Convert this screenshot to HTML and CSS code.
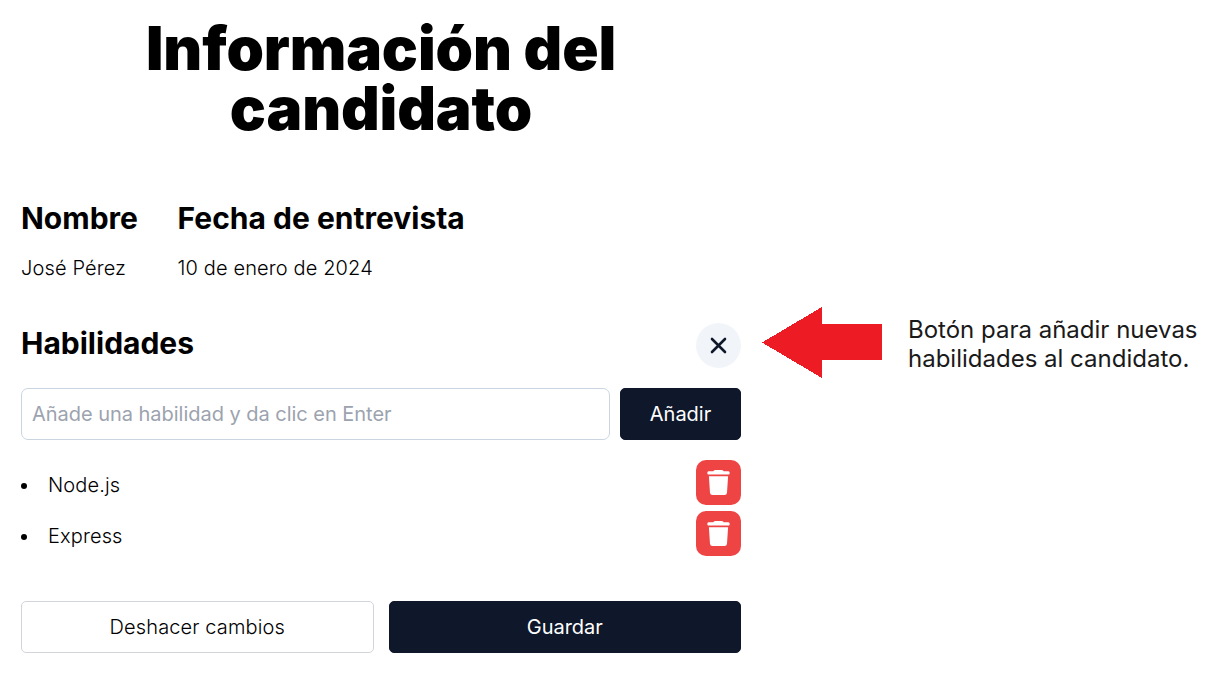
FILE: index.html
```html
<!DOCTYPE html>
<html lang="es">
<head>
<meta charset="utf-8">
<title>Información del candidato</title>
<link rel="stylesheet" href="styles.css">
</head>
<body>
<div class="page">
  <main class="candidate">
    <h1 class="title">Información del candidato</h1>
    <div class="facts">
      <section class="fact fact-name"><h2>Nombre</h2><p>José Pérez</p></section>
      <section class="fact"><h2>Fecha de entrevista</h2><p>10 de enero de 2024</p></section>
    </div>
    <div class="skills-head">
      <h2 class="skills-title">Habilidades</h2>
      <button class="close" aria-label="Cerrar"><svg width="45" height="45" viewBox="0 0 45 45"><path d="M16 16L29 29M29 16L16 29" stroke="#0f172a" stroke-width="2.6" stroke-linecap="round" fill="none"/></svg></button>
    </div>
    <div class="add-row">
      <input class="skill-input" type="text" placeholder="Añade una habilidad y da clic en Enter">
      <button class="btn primary add">Añadir</button>
    </div>
    <ul class="skills">
      <li class="skill"><i class="dot"></i><span>Node.js</span><button class="delete" aria-label="Eliminar"><svg width="45" height="45" viewBox="0 0 45 45"><path d="M12.500 11.300H17.200Q18.200 9.900 19.500 9.900H25.500Q26.800 9.900 27.800 11.300H32.500Q33.700 11.300 33.700 12.900Q33.700 14.500 32.500 14.500H12.500Q11.300 14.500 11.300 12.900Q11.300 11.300 12.500 11.300ZM12.900 16.200H32.100L31 32.700Q30.800 35.100 28.500 35.100H16.500Q14.200 35.100 14 32.700Z" fill="#fff"/></svg></button></li>
      <li class="skill"><i class="dot"></i><span>Express</span><button class="delete" aria-label="Eliminar"><svg width="45" height="45" viewBox="0 0 45 45"><path d="M12.500 11.300H17.200Q18.200 9.900 19.500 9.900H25.500Q26.800 9.900 27.800 11.300H32.500Q33.700 11.300 33.700 12.900Q33.700 14.500 32.500 14.500H12.500Q11.300 14.500 11.300 12.900Q11.300 11.300 12.500 11.300ZM12.900 16.200H32.100L31 32.700Q30.800 35.100 28.500 35.100H16.500Q14.200 35.100 14 32.700Z" fill="#fff"/></svg></button></li>
    </ul>
    <div class="actions">
      <button class="btn outline">Deshacer cambios</button>
      <button class="btn primary">Guardar</button>
    </div>
  </main>
  <aside class="note">
    <svg class="arrow" width="120" height="72" viewBox="0 0 120 72" shape-rendering="crispEdges"><path d="M0 35.500L60 0V17H120V53H60V71Z" fill="#ed1c24"/></svg>
    <p class="note-text">Botón para añadir nuevas<br>habilidades al candidato.</p>
  </aside>
</div>
</body>
</html>
```
FILE: styles.css
```css
* { box-sizing: border-box; margin: 0; padding: 0; }
body { background: #fff; color: #000; font-family: Inter, sans-serif; font-size: 20px; font-weight: 300; letter-spacing: 0.13px; overflow: hidden; }
.page { display: flex; width: 1232px; height: 678px; }
.candidate { width: 720px; margin-left: 21px; padding-top: 18px; }
.title { font-size: 60px; line-height: 60px; font-weight: 900; letter-spacing: -0.13px; text-align: center; padding: 0 90px; }
.facts { display: flex; gap: 41.600px; margin-top: 62px; }
.fact h2, .skills-title { font-size: 30px; line-height: 36px; font-weight: 700; letter-spacing: 0; white-space: nowrap; }
.fact p { line-height: 28px; margin-top: 18px; }
.fact-name { width: 115px; }
.skills-head { display: flex; justify-content: space-between; margin-top: 41px; height: 65px; }
.skills-title { padding-top: 2px; }
button { border: 0; font: inherit; letter-spacing: inherit; color: inherit; display: flex; align-items: center; justify-content: center; }
.close { width: 45px; height: 45px; border-radius: 50%; background: #f1f5f9; }
.add-row { display: flex; gap: 10px; }
.skill-input { flex: 1; height: 52px; border: 1px solid #cbd5e1; border-radius: 7px; padding: 0 10px; font: inherit; font-weight: 400; letter-spacing: -0.03px; }
.skill-input::placeholder { color: #9ca3af; opacity: 1; }
.btn { height: 52px; border-radius: 5px; flex: 1; border: 1px solid #0f172a; }
.primary { background: #0f172a; color: #fff; font-weight: 400; letter-spacing: -0.03px; }
.add { flex: 0 0 121px; }
.skills { list-style: none; margin-top: 20px; display: flex; flex-direction: column; gap: 6px; }
.skill { display: flex; align-items: center; height: 45px; }
.skill span { flex: 1; padding-top: 5px; }
.dot { width: 6px; height: 6px; border-radius: 50%; background: #000; margin: 7px 21px 0 0; }
.delete { width: 45px; height: 45px; border-radius: 10px; background: #ef4444; }
.actions { display: flex; gap: 15px; margin-top: 45px; }
.outline { border-color: #d1d5db; background: #fff; }
.note { display: flex; margin: 307px 0 0 21px; }
.note-text { font-size: 24px; font-weight: 400; letter-spacing: 0; line-height: 29px; margin: 8px 0 0 26px; white-space: nowrap; color: #1a1a1a; }
```
